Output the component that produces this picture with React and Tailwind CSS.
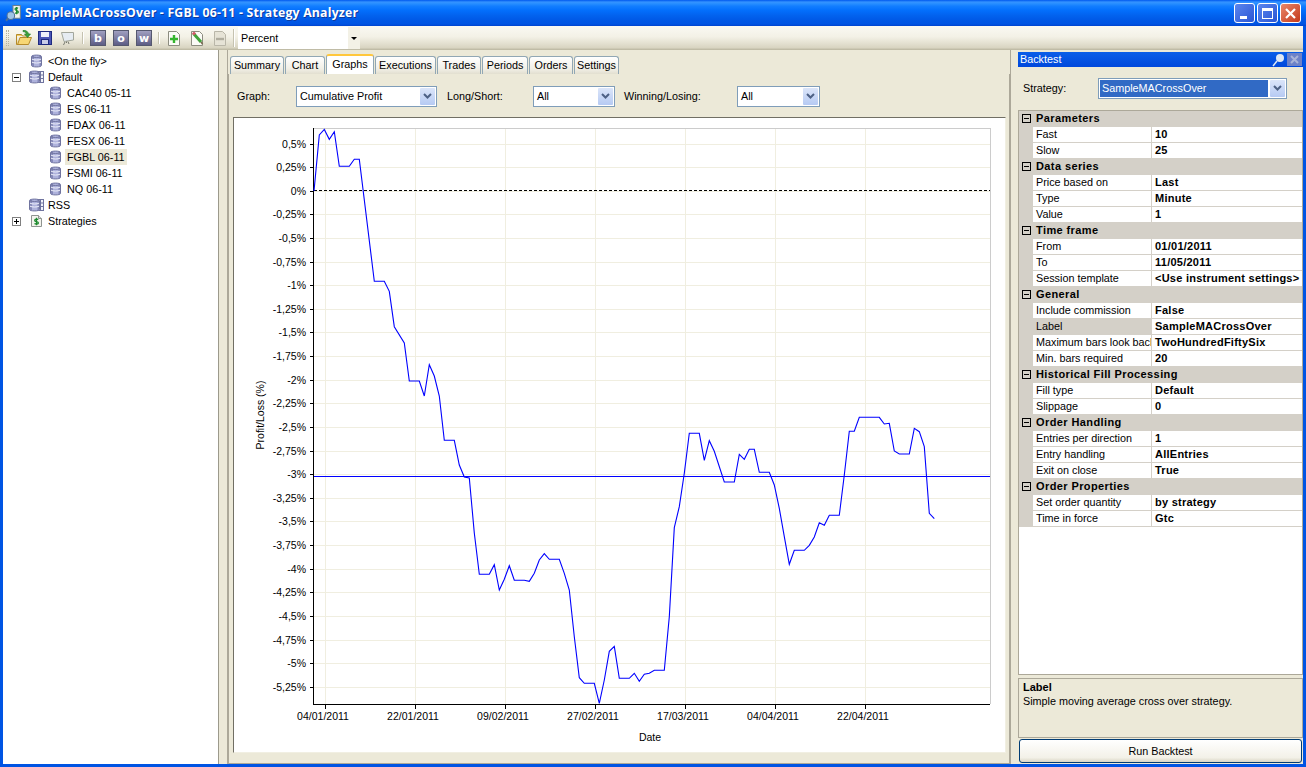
import React from 'react';

const TREE = [
  { label: '<On the fly>', depth: 1, icon: 'db' },
  { label: 'Default', depth: 1, icon: 'table', toggle: '-' },
  { label: 'CAC40 05-11', depth: 2, icon: 'db' },
  { label: 'ES 06-11', depth: 2, icon: 'db' },
  { label: 'FDAX 06-11', depth: 2, icon: 'db' },
  { label: 'FESX 06-11', depth: 2, icon: 'db' },
  { label: 'FGBL 06-11', depth: 2, icon: 'db', selected: true },
  { label: 'FSMI 06-11', depth: 2, icon: 'db' },
  { label: 'NQ 06-11', depth: 2, icon: 'db' },
  { label: 'RSS', depth: 1, icon: 'table' },
  { label: 'Strategies', depth: 1, icon: 'doc', toggle: '+' },
];

const TABS = [
  { label: 'Summary', w: 'w-[54px]' },
  { label: 'Chart', w: 'w-[40px]' },
  { label: 'Graphs', w: 'w-[48px]', active: true },
  { label: 'Executions', w: 'w-[61px]' },
  { label: 'Trades', w: 'w-[44px]' },
  { label: 'Periods', w: 'w-[46px]' },
  { label: 'Orders', w: 'w-[44px]' },
  { label: 'Settings', w: 'w-[45px]' },
];

const PROPS = [
  ['Parameters', [['Fast', '10'], ['Slow', '25']]],
  ['Data series', [['Price based on', 'Last'], ['Type', 'Minute'], ['Value', '1']]],
  ['Time frame', [['From', '01/01/2011'], ['To', '11/05/2011'], ['Session template', '<Use instrument settings>']]],
  ['General', [['Include commission', 'False'], ['Label', 'SampleMACrossOver', true], ['Maximum bars look back', 'TwoHundredFiftySix'], ['Min. bars required', '20']]],
  ['Historical Fill Processing', [['Fill type', 'Default'], ['Slippage', '0']]],
  ['Order Handling', [['Entries per direction', '1'], ['Entry handling', 'AllEntries'], ['Exit on close', 'True']]],
  ['Order Properties', [['Set order quantity', 'by strategy'], ['Time in force', 'Gtc']]],
];

const Y_LABELS = ['0,5%', '0,25%', '0%', '-0,25%', '-0,5%', '-0,75%', '-1%', '-1,25%', '-1,5%', '-1,75%', '-2%', '-2,25%', '-2,5%', '-2,75%', '-3%', '-3,25%', '-3,5%', '-3,75%', '-4%', '-4,25%', '-4,5%', '-4,75%', '-5%', '-5,25%'];
const X_LABELS = ['04/01/2011', '22/01/2011', '09/02/2011', '27/02/2011', '17/03/2011', '04/04/2011', '22/04/2011'];

const LINE = '314,191 319.3,135 324.3,129.5 329.3,139.3 334.3,131.7 339.3,166.3 349.3,166.3 354.3,159.3 359.3,159.3 374.3,281.3 384.3,281.3 389.3,291.3 394.3,326.7 404.3,343 409.3,381 419.3,381 424.3,396 429.3,364.7 434.3,376 439.3,396 444.3,440.3 454.3,440.3 459.3,465 464.3,477 469.3,478 474.3,533 479.3,574.3 489.3,574.3 494.3,564.7 499.3,590 504.3,579.3 509.3,565.7 514.3,580.3 524.3,580.3 529.3,581.3 534.3,573.3 539.3,560 544.3,553.7 549.3,559.3 559.3,559.3 564.3,573.3 569.3,590 574.3,636.7 579.3,677.7 584.3,683.3 594.3,683.3 599.3,703.3 604.3,680 609.3,651.3 614.3,646.3 619.3,678.3 629.3,678.3 634.3,673.3 639.3,681.3 644.3,674.3 649.3,673.3 654.3,670.3 664.3,670.3 669.3,616.7 674.3,527.7 679.3,506.7 684.3,473.3 689.3,433.3 699.3,433.3 704.3,460.3 709.3,440.7 714.3,451.3 724.3,482 734.3,482 739.3,454.3 744.3,459.3 749.3,449.3 754.3,449.3 759.3,472.3 769.3,472.3 774.3,485 779.3,508.3 784.3,536.7 789.3,564.3 794.3,550.3 804.3,550.3 809.3,545.3 814.3,537 819.3,522.7 824.3,525.3 829.3,515.3 839.3,515.3 844.3,475 849.3,431.3 854.3,431.3 859.3,417.3 879.3,417.3 884.3,424 889.3,423.3 894.3,451 899.3,454 909.3,454 914.3,428.3 919.3,431.7 924.3,446.7 929.3,513.3 934.3,518.7';

const yOf = (i) => Math.round(143.5 + i * 23.62);
const xOf = (i) => 325 + i * 90;

const Cylinder = () => (
  <>
    <path d="M0.5 2.5C0.5 0.6 10.5 0.6 10.5 2.5V11.5C10.5 13.4 0.5 13.4 0.5 11.5Z" fill="#aeb2dc" stroke="#70749f" />
    <path d="M1 1.5H3V12.5H1ZM8.5 2H10V12.5H8.5Z" fill="#8589b8" />
    <path d="M1 5.2C3 6.3 8 6.3 10 5.2M1 8.2C3 9.3 8 9.3 10 8.2" fill="none" stroke="#eef0fb" />
    <path d="M1 2.6C3 3.8 8 3.8 10 2.6" fill="none" stroke="#70749f" />
  </>
);

const DbIcon = () => (
  <svg width="11" height="14" viewBox="0 0 11 14" className="shrink-0">
    <Cylinder />
  </svg>
);

const TableIcon = () => (
  <svg width="15" height="14" viewBox="0 0 15 14" className="shrink-0">
    <rect x="8.5" y="1.5" width="6" height="11" fill="#f2f4fa" stroke="#70749f" />
    <path d="M8.5 5H14.5M8.5 8.5H14.5M11.5 1.5V12.5" stroke="#70749f" />
    <Cylinder />
  </svg>
);

const StrategyIcon = () => (
  <svg width="13" height="14" viewBox="0 0 13 14" className="shrink-0">
    <path d="M1.5 1.5H8.5L11.5 4.5V12.5H1.5Z" fill="#f4f4ee" stroke="#8f9490" />
    <path d="M8.5 1.5V4.5H11.5" fill="#dddddd" stroke="#8f9490" />
    <path d="M8.3 5.6C7.4 4.8 4.7 4.8 4.7 6.4C4.7 8 8.4 7.4 8.4 9C8.4 10.5 5.6 10.5 4.5 9.6M6.5 3.8V11.2" fill="none" stroke="#1d8a2e" strokeWidth="1.3" />
  </svg>
);

const TREE_ICONS = { db: DbIcon, table: TableIcon, doc: StrategyIcon };

const Toggle = ({ sign }) => (
  <span className="relative flex h-[9px] w-[9px] shrink-0 border border-[#808080] bg-white">
    <span className="absolute left-[1px] top-[3px] h-px w-[5px] bg-black" />
    {sign === '+' && <span className="absolute left-[3px] top-[1px] h-[5px] w-px bg-black" />}
  </span>
);

const FolderIcon = () => (
  <svg width="18" height="18" viewBox="0 0 18 18">
    <path d="M1.5 7V15.5H13.5L16.5 8.5H5L2.8 15" fill="#f7d774" stroke="#b58a2b" />
    <path d="M1.5 7V5.5H6.5L7.5 7H11" fill="#f3cd64" stroke="#b58a2b" />
    <path d="M8 1.5C11 1 13 2.5 13.5 5L15.5 5L12.5 8.5L9.5 5H11.5C11 3.5 10 2.7 8 2.6Z" fill="#3fa33a" stroke="#1f7a2a" strokeWidth="0.7" />
  </svg>
);

const SaveIcon = () => (
  <svg width="16" height="16" viewBox="0 0 16 16">
    <rect x="1.5" y="1.5" width="13" height="13" fill="#4a55b5" stroke="#1e2a80" />
    <rect x="4" y="2" width="8" height="5" fill="#eef0fa" />
    <rect x="4.5" y="9.5" width="7" height="5" fill="#c9cde8" stroke="#1e2a80" />
  </svg>
);

const ScreenIcon = () => (
  <svg width="16" height="16" viewBox="0 0 16 16">
    <path d="M2.5 2.5H14.5V10L5 11.5Z" fill="#e6ecf2" stroke="#a3a79c" />
    <path d="M6 12L4.5 15M9 11.5L10 14M7.5 11.5V13" stroke="#77796f" />
  </svg>
);

const DocIcon = ({ mark }) => (
  <svg width="14" height="17" viewBox="0 0 14 17">
    <path d="M1.5 1.5H9.5L12.5 4.5V15.5H1.5Z" fill={mark === 'minus' ? '#e6e3d6' : '#fbfbf6'} stroke={mark === 'minus' ? '#b9b6a8' : '#8c8c80'} />
    {mark === 'plus' && <path d="M7 5V13M3 9H11" stroke="#35b52e" strokeWidth="2.4" />}
    {mark === 'minus' && <path d="M3 9H11" stroke="#b0ad9f" strokeWidth="2.4" />}
    {mark === 'pencil' && (
      <>
        <path d="M3.5 3.5L11 12" stroke="#3fa33a" strokeWidth="3" />
        <path d="M3 2.5L5 4.5" stroke="#d35a6a" strokeWidth="3" />
        <path d="M11 12L12.5 14" stroke="#7b6a50" strokeWidth="1.6" />
      </>
    )}
  </svg>
);

const LetterButton = ({ letter }) => (
  <span className="flex h-[16px] w-[16px] items-center justify-center border border-[#55586f] bg-[linear-gradient(to_bottom,#a09fc0,#5d5d85)] font-['DejaVu_Sans'] text-[11px] font-bold leading-none text-white">
    {letter}
  </span>
);

const Separator = () => <span className="mx-[5px] h-[18px] w-[2px] border-x border-l-[#c5c2b0] border-r-white" />;

const Chevron = () => (
  <svg width="9" height="6" viewBox="0 0 9 6">
    <path d="M1 1L4.5 4.5L8 1" fill="none" stroke="#4d6185" strokeWidth="2" />
  </svg>
);

const Combo = ({ label, className, selected }) => (
  <div className={`flex h-[21px] items-center border border-[#7f9db9] bg-white p-[1px] ${className}`}>
    <span className={`flex h-full flex-1 items-center pl-[2px] ${selected ? 'bg-[#316ac5] text-white' : ''}`}>{label}</span>
    <span className="ml-[2px] flex h-full w-[15px] items-center justify-center rounded-[1px] bg-[linear-gradient(to_bottom,#dbe5f9,#b6caf3)]">
      <Chevron />
    </span>
  </div>
);

const GraphChart = () => (
  <svg viewBox="234 118 771 634" className="block h-[634px] w-[771px] font-['Liberation_Sans'] text-[10.5px]" fill="#000">
    <g shapeRendering="crispEdges">
      {Y_LABELS.map((_, i) => (
        <line key={i} x1="314" x2="990" y1={yOf(i) + 0.5} y2={yOf(i) + 0.5} stroke="#f0eee0" />
      ))}
      {X_LABELS.map((_, i) => (
        <line key={i} x1={xOf(i) + 0.5} x2={xOf(i) + 0.5} y1="128" y2="704" stroke="#f0eee0" />
      ))}
      <path d="M314 128.5H990.5V704" fill="none" stroke="#cccccc" />
      <line x1="314" x2="990" y1="190.5" y2="190.5" stroke="#000" strokeDasharray="3 2" />
      <line x1="314" x2="990" y1="476.5" y2="476.5" stroke="#0000ff" />
      <path d="M313.5 128V704.5H990" fill="none" stroke="#000" />
      {Y_LABELS.map((_, i) => (
        <line key={i} x1="310" x2="314" y1={yOf(i) + 0.5} y2={yOf(i) + 0.5} stroke="#000" />
      ))}
      {X_LABELS.map((_, i) => (
        <line key={i} x1={xOf(i) + 0.5} x2={xOf(i) + 0.5} y1="704" y2="709" stroke="#000" />
      ))}
    </g>
    <polyline points={LINE} fill="none" stroke="#0000ff" strokeWidth="1.1" />
    {Y_LABELS.map((t, i) => (
      <text key={t} x="306" y={yOf(i) + 4} textAnchor="end">{t}</text>
    ))}
    {X_LABELS.map((t, i) => (
      <text key={t} x={xOf(i) - 2} y="720" textAnchor="middle">{t}</text>
    ))}
    <text x="650" y="741" textAnchor="middle">Date</text>
    <text transform="translate(264 415) rotate(-90)" textAnchor="middle">Profit/Loss (%)</text>
  </svg>
);

export default function App() {
  return (
    <div className="flex h-[767px] w-[1306px] flex-col overflow-hidden bg-[#ece9d8] font-['Liberation_Sans',sans-serif] text-[10.8px] text-black">
      {/* Title bar */}
      <div className="flex h-[26px] shrink-0 items-center bg-[linear-gradient(to_bottom,#0058ee,#3593ff_8%,#288eff_14%,#127dff_24%,#036ffc_40%,#0262ee_60%,#0057e5_80%,#0054e3_92%,#0043cf)] pl-[5px] pr-[5px]">
        <svg width="18" height="18" viewBox="0 0 17 17" className="shrink-0">
          <path d="M7.5 1.5H14.5V13.5H7.5Z" fill="#f2f4ee" stroke="#6b7f8f" />
          <path d="M12.4 4C11.5 3.3 9.4 3.4 9.5 5C9.6 6.5 12.6 6 12.6 7.6C12.6 9 10.3 9 9.4 8.2M11 2.8V9.6" fill="none" stroke="#1d8a2e" strokeWidth="1.2" />
          <circle cx="5.5" cy="11" r="3.6" fill="#9fc4e6" stroke="#4d6f99" />
          <path d="M3 13.5L1 15.8" stroke="#4d6f99" strokeWidth="2" />
        </svg>
        <span className="ml-[2px] flex-1 font-['Open_Sans',sans-serif] text-[12.3px] font-bold tracking-[0.2px] text-white [text-shadow:1px_1px_0_#0f3a9c]">
          SampleMACrossOver - FGBL 06-11 - Strategy Analyzer
        </span>
        <span className="flex h-[20px] w-[21px] items-end justify-start rounded-[3px] border border-white bg-[linear-gradient(135deg,#5b86ee,#2a55d4)] pb-[3px] pl-[5px]">
          <span className="h-[3px] w-[7px] bg-white" />
        </span>
        <span className="ml-[2px] flex h-[20px] w-[21px] items-center justify-center rounded-[3px] border border-white bg-[linear-gradient(135deg,#5b86ee,#2a55d4)]">
          <span className="h-[11px] w-[11px] border border-t-[3px] border-white" />
        </span>
        <span className="ml-[2px] flex h-[20px] w-[21px] items-center justify-center rounded-[3px] border border-white bg-[linear-gradient(135deg,#e9886a,#c4381a)]">
          <svg width="13" height="13" viewBox="0 0 13 13">
            <path d="M2 2L11 11M11 2L2 11" stroke="#fff" strokeWidth="2.2" />
          </svg>
        </span>
      </div>

      {/* Toolbar */}
      <div className="flex h-[24px] shrink-0 items-center border-x-[3px] border-[#0054e3] bg-[linear-gradient(to_bottom,#faf9f3,#f3f1e6_45%,#d9d5c2_90%,#b9b59f)] pl-[3px]">
        <span className="mr-[5px] h-[16px] w-[3px] border-x border-dotted border-[#b5b29f]" />
        <span className="flex w-[19px] justify-center"><FolderIcon /></span>
        <span className="ml-[3px] flex w-[17px] justify-center"><SaveIcon /></span>
        <span className="ml-[5px] flex w-[17px] justify-center"><ScreenIcon /></span>
        <span className="ml-[2px]"><Separator /></span>
        <span className="ml-[1px]"><LetterButton letter="b" /></span>
        <span className="ml-[7px]"><LetterButton letter="o" /></span>
        <span className="ml-[7px]"><LetterButton letter="w" /></span>
        <span className="ml-[1px]"><Separator /></span>
        <span className="flex w-[17px] justify-center"><DocIcon mark="plus" /></span>
        <span className="ml-[6px] flex w-[17px] justify-center"><DocIcon mark="pencil" /></span>
        <span className="ml-[6px] flex w-[17px] justify-center"><DocIcon mark="minus" /></span>
        <Separator />
        <div className="-ml-[2px] flex h-[22px] w-[122px] items-center bg-white pl-[3px]">
          <span className="flex-1">Percent</span>
          <span className="flex h-full w-[12px] items-center justify-center bg-[#f3f1e6]">
            <span className="border-x-[3px] border-t-[3px] border-x-transparent border-t-black" />
          </span>
        </div>
      </div>

      {/* Main area */}
      <div className="flex min-h-0 flex-1 border-x-[3px] border-b-[3px] border-[#0054e3]">
        {/* Instrument tree */}
        <div className="w-[216px] shrink-0 border-r border-[#9c9a8c] bg-white pt-[3px]">
          {TREE.map((item) => {
            const Icon = TREE_ICONS[item.icon];
            return (
              <div key={item.label} className={`flex h-[16px] items-center ${item.depth === 2 ? 'pl-[45px]' : 'pl-[9px]'}`}>
                {item.depth === 1 && (
                  <span className="flex w-[17px] shrink-0 items-center">{item.toggle && <Toggle sign={item.toggle} />}</span>
                )}
                <span className={`flex shrink-0 justify-center ${item.depth === 2 ? 'w-[14px]' : 'w-[15px]'}`}><Icon /></span>
                <span className={`flex h-[16px] items-center whitespace-nowrap px-[2px] ${item.depth === 2 ? 'ml-[3px]' : 'ml-[2px]'} ${item.selected ? 'bg-[#ece9d8]' : ''}`}>
                  {item.label}
                </span>
              </div>
            );
          })}
        </div>

        {/* Splitter */}
        <div className="w-[9px] shrink-0 border-r border-[#aca899] bg-[#ece9d8]" />

        {/* Center panel */}
        <div className="flex w-[782px] shrink-0 flex-col pt-[4px]">
          <div className="flex h-[20px] shrink-0 items-end gap-[1px] pl-[2px]">
            {TABS.map((tab) =>
              tab.active ? (
                <div key={tab.label} className={`${tab.w} flex h-[20px] shrink-0 items-center justify-center rounded-t-[3px] border-x border-[#91a7b4] border-t-2 border-t-[#ffc73c] bg-white pb-[2px]`}>
                  {tab.label}
                </div>
              ) : (
                <div key={tab.label} className={`${tab.w} flex h-[18px] shrink-0 items-center justify-center rounded-t-[3px] border-x border-t border-[#91a7b4] bg-[linear-gradient(to_bottom,#ffffff,#f1efe6_70%,#e2dfd0)]`}>
                  {tab.label}
                </div>
              )
            )}
          </div>
          <div className="flex min-h-0 flex-1 flex-col border border-t-0 border-[#aca899] bg-[#ece9d8] pb-[10px] pl-[4px] pr-[3px]">
            <div className="flex h-[43px] shrink-0 items-center pl-[4px] pt-[1px]">
              <span className="w-[59px]">Graph:</span>
              <Combo label="Cumulative Profit" className="w-[141px]" />
              <span className="ml-[10px] w-[86px]">Long/Short:</span>
              <Combo label="All" className="w-[82px]" />
              <span className="ml-[9px] w-[113px]">Winning/Losing:</span>
              <Combo label="All" className="w-[83px]" />
            </div>
            <div className="min-h-0 flex-1 border border-b-[#f1efe2] border-l-[#716f64] border-r-[#f1efe2] border-t-[#716f64] bg-white">
              <GraphChart />
            </div>
          </div>
        </div>

        {/* Splitter */}
        <div className="w-[8px] shrink-0 border-l border-[#aca899] bg-[#ece9d8]" />

        {/* Backtest panel */}
        <div className="flex min-w-0 flex-1 flex-col pt-[2px]">
          <div className="flex h-[15px] shrink-0 items-center bg-[linear-gradient(to_bottom,#0a5ee8,#0048dc)] pl-[2px] pr-[1px] text-white">
            <span className="flex-1">Backtest</span>
            <svg width="14" height="14" viewBox="0 0 14 14">
              <circle cx="8" cy="5" r="4" fill="#dfe8f4" />
              <path d="M5 8L1 13" stroke="#dfe8f4" strokeWidth="1.5" />
            </svg>
            <span className="ml-[1px] flex h-[13px] w-[15px] items-center justify-center bg-[#6d82c8]">
              <svg width="9" height="9" viewBox="0 0 9 9">
                <path d="M1 1L8 8M8 1L1 8" stroke="#a9b4d8" strokeWidth="2" />
              </svg>
            </span>
          </div>
          <div className="flex h-[43px] shrink-0 items-center pb-[1px] pl-[5px]">
            <span className="w-[75px]">Strategy:</span>
            <Combo label="SampleMACrossOver" className="w-[189px]" selected />
          </div>
          <div className="min-h-0 flex-1 border border-[#aca899] bg-white">
            {PROPS.map(([group, rows]) => (
              <div key={group}>
                <div className="flex h-[16px] items-center bg-[#d4d0c8] pb-[1px] pl-[3px] text-[11px] font-bold tracking-[0.4px]">
                  <span className="w-[14px] shrink-0">
                    <span className="relative block h-[9px] w-[9px] border border-black bg-[#d4d0c8]">
                      <span className="absolute left-[1px] top-[3px] h-px w-[5px] bg-black" />
                    </span>
                  </span>
                  <span className="whitespace-nowrap">{group}</span>
                </div>
                {rows.map(([name, value, gray]) => (
                  <div key={name} className="flex h-[16px] bg-[#d4d0c8] pl-[14px]">
                    <span className={`flex w-[119px] shrink-0 items-center overflow-hidden whitespace-nowrap border-b border-r border-[#d4d0c8] pl-[3px] ${gray ? 'bg-[#d4d0c8]' : 'bg-white'}`}>
                      {name}
                    </span>
                    <span className="flex flex-1 items-center overflow-hidden whitespace-nowrap border-b border-[#d4d0c8] bg-white pl-[3px] text-[11px] font-bold tracking-[0.25px]">
                      {value}
                    </span>
                  </div>
                ))}
              </div>
            ))}
          </div>
          <div className="mt-[3px] h-[60px] shrink-0 border border-[#aca899] bg-[#ece9d8] pl-[4px] pt-[1px] leading-[14px]">
            <div className="text-[11px] font-bold">Label</div>
            <div>Simple moving average cross over strategy.</div>
          </div>
          <button className="mx-[1px] mb-[1px] mt-[1px] h-[24px] shrink-0 rounded-[3px] border border-[#003c74] bg-[linear-gradient(to_bottom,#ffffff,#f3f1e8_80%,#d9d5c4)]">
            Run Backtest
          </button>
        </div>
      </div>
    </div>
  );
}
